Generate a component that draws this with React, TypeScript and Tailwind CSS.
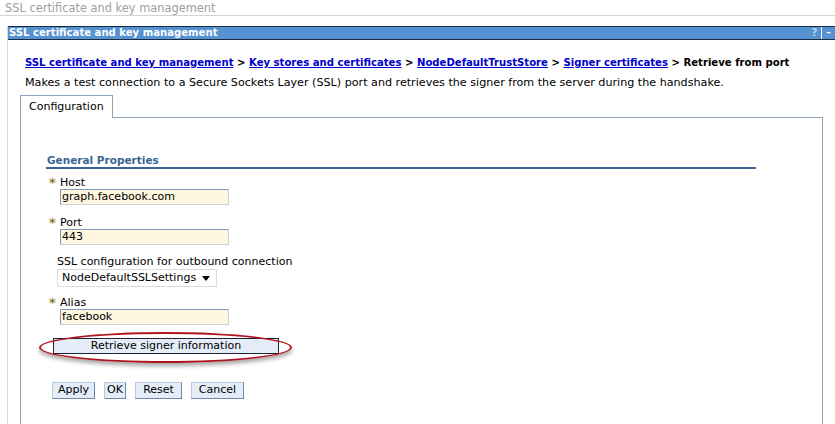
import React from "react";

const font = { fontFamily: '"DejaVu Sans", Verdana, sans-serif' };

function Star() {
  return <span className="inline-block w-[11px] text-[13px] leading-[12px] text-[#8a7b2c] font-bold">*</span>;
}

function Field({ label, value, required }: { label: string; value: string; required?: boolean }) {
  return (
    <div className="flex flex-col">
      <div className="flex items-center h-[13px] pl-[2px]">
        {required ? <Star /> : null}
        <span className="text-[11px] leading-[13px] text-black">{label}</span>
      </div>
      <div className="ml-[13px] w-[169px] h-[16px] bg-[#fff6de] border border-[#7f9db9] border-r-[#c8d2dc] border-b-[#c8d2dc] text-[11px] leading-[14px] pl-[1px] text-black">
        {value}
      </div>
    </div>
  );
}

function Btn({ children, w }: { children: React.ReactNode; w: string }) {
  return (
    <div className={`${w} h-[17px] flex items-center justify-center bg-[#e4ecf7] border border-[#b7c7dc] border-r-[#6f86a6] border-b-[#6f86a6] text-[11px] text-black`}>
      {children}
    </div>
  );
}

export default function App() {
  return (
    <div style={font} className="w-[835px] h-[424px] bg-white overflow-hidden relative">
      <div className="h-[16px] border-b border-[#d4d4d4] pl-[5px] pt-[1px] text-[11.4px] leading-[14px] text-[#a0a0a0]">
        SSL certificate and key management
      </div>
      <div className="mt-[10px] ml-[7px] border-l border-[#d8d8d8] h-[398px]">
        <div className="h-[14px] bg-[#5592d2] border-t border-b border-[#1a2a40] flex items-center justify-between">
          <span className="pl-[1px] text-[10.1px] leading-[12px] font-bold text-white">SSL certificate and key management</span>
          <div className="flex h-full">
            <span className="w-[13px] text-center text-[10px] leading-[12px] font-bold text-[#b8d0ec]">?</span>
            <span className="w-[1px] bg-white"></span>
            <span className="w-[13px] text-center text-[10px] leading-[12px] font-bold text-[#e8f0fa]">–</span>
          </div>
        </div>
        <div className="pl-[17px] pt-[16px] leading-[14px]">
          <div className="font-bold text-black text-[10.1px]">
            <span className="text-[#0000cc] underline">SSL certificate and key management</span>{" > "}
            <span className="text-[#0000cc] underline">Key stores and certificates</span>{" > "}
            <span className="text-[#0000cc] underline">NodeDefaultTrustStore</span>{" > "}
            <span className="text-[#0000cc] underline">Signer certificates</span>{" > "}
            Retrieve from port
          </div>
          <div className="mt-[6px] text-black text-[11.15px]">
            Makes a test connection to a Secure Sockets Layer (SSL) port and retrieves the signer from the server during the handshake.
          </div>
        </div>
        <div className="ml-[12px] mt-[5px] w-[803px]">
          <div className="flex">
            <div className="w-[93px] h-[23px] border border-b-0 border-[#8fa3bd] bg-white flex items-center pl-[8px] text-[11px] text-black">
              Configuration
            </div>
          </div>
          <div className="border-l border-r border-t border-[#8fa3bd] h-[320px] -mt-[1px] pl-[25px] pt-[35px]">
            <div className="w-[710px] border-b-2 border-[#3a6493] text-[10.5px] leading-[14px] font-bold text-[#3a6493] pl-[1px]">
              General Properties
            </div>
            <div className="pl-[1px] mt-[7px] flex flex-col gap-[2px]">
              <Field label="Host" value="graph.facebook.com" required />
              <div className="mt-[9px]">
                <Field label="Port" value="443" required />
              </div>
              <div className="mt-[8px] ml-[10px] flex flex-col">
                <span className="text-[11px] leading-[14px] text-black">SSL configuration for outbound connection</span>
                <div className="w-[160px] h-[18px] border border-[#dcdcdc] bg-white flex items-center justify-between pl-[4px] pr-[6px] text-[11px] text-black">
                  <span>NodeDefaultSSLSettings</span>
                  <svg width="8" height="5" viewBox="0 0 8 5"><path d="M0 0h8L4 5z" fill="#000" /></svg>
                </div>
              </div>
              <div className="mt-[7px]">
                <Field label="Alias" value="facebook" required />
              </div>
            </div>
            <div className="relative ml-[7px] mt-[13px] w-[226px] h-[16px] bg-[#e4ecf8] border border-[#1e2530] flex items-center justify-center text-[11px] text-black">
              Retrieve signer information
              <div className="absolute left-[-15px] top-[-7px] w-[253px] h-[31px] rounded-[50%] border-2 border-[#b0141e] shadow-[0_3px_4px_rgba(0,0,0,0.35)]"></div>
            </div>
            <div className="flex ml-[6px] mt-[28px] gap-[9px]">
              <Btn w="w-[43px]">Apply</Btn>
              <Btn w="w-[22px]">OK</Btn>
              <Btn w="w-[47px]">Reset</Btn>
              <Btn w="w-[53px]">Cancel</Btn>
            </div>
          </div>
        </div>
      </div>
    </div>
  );
}
